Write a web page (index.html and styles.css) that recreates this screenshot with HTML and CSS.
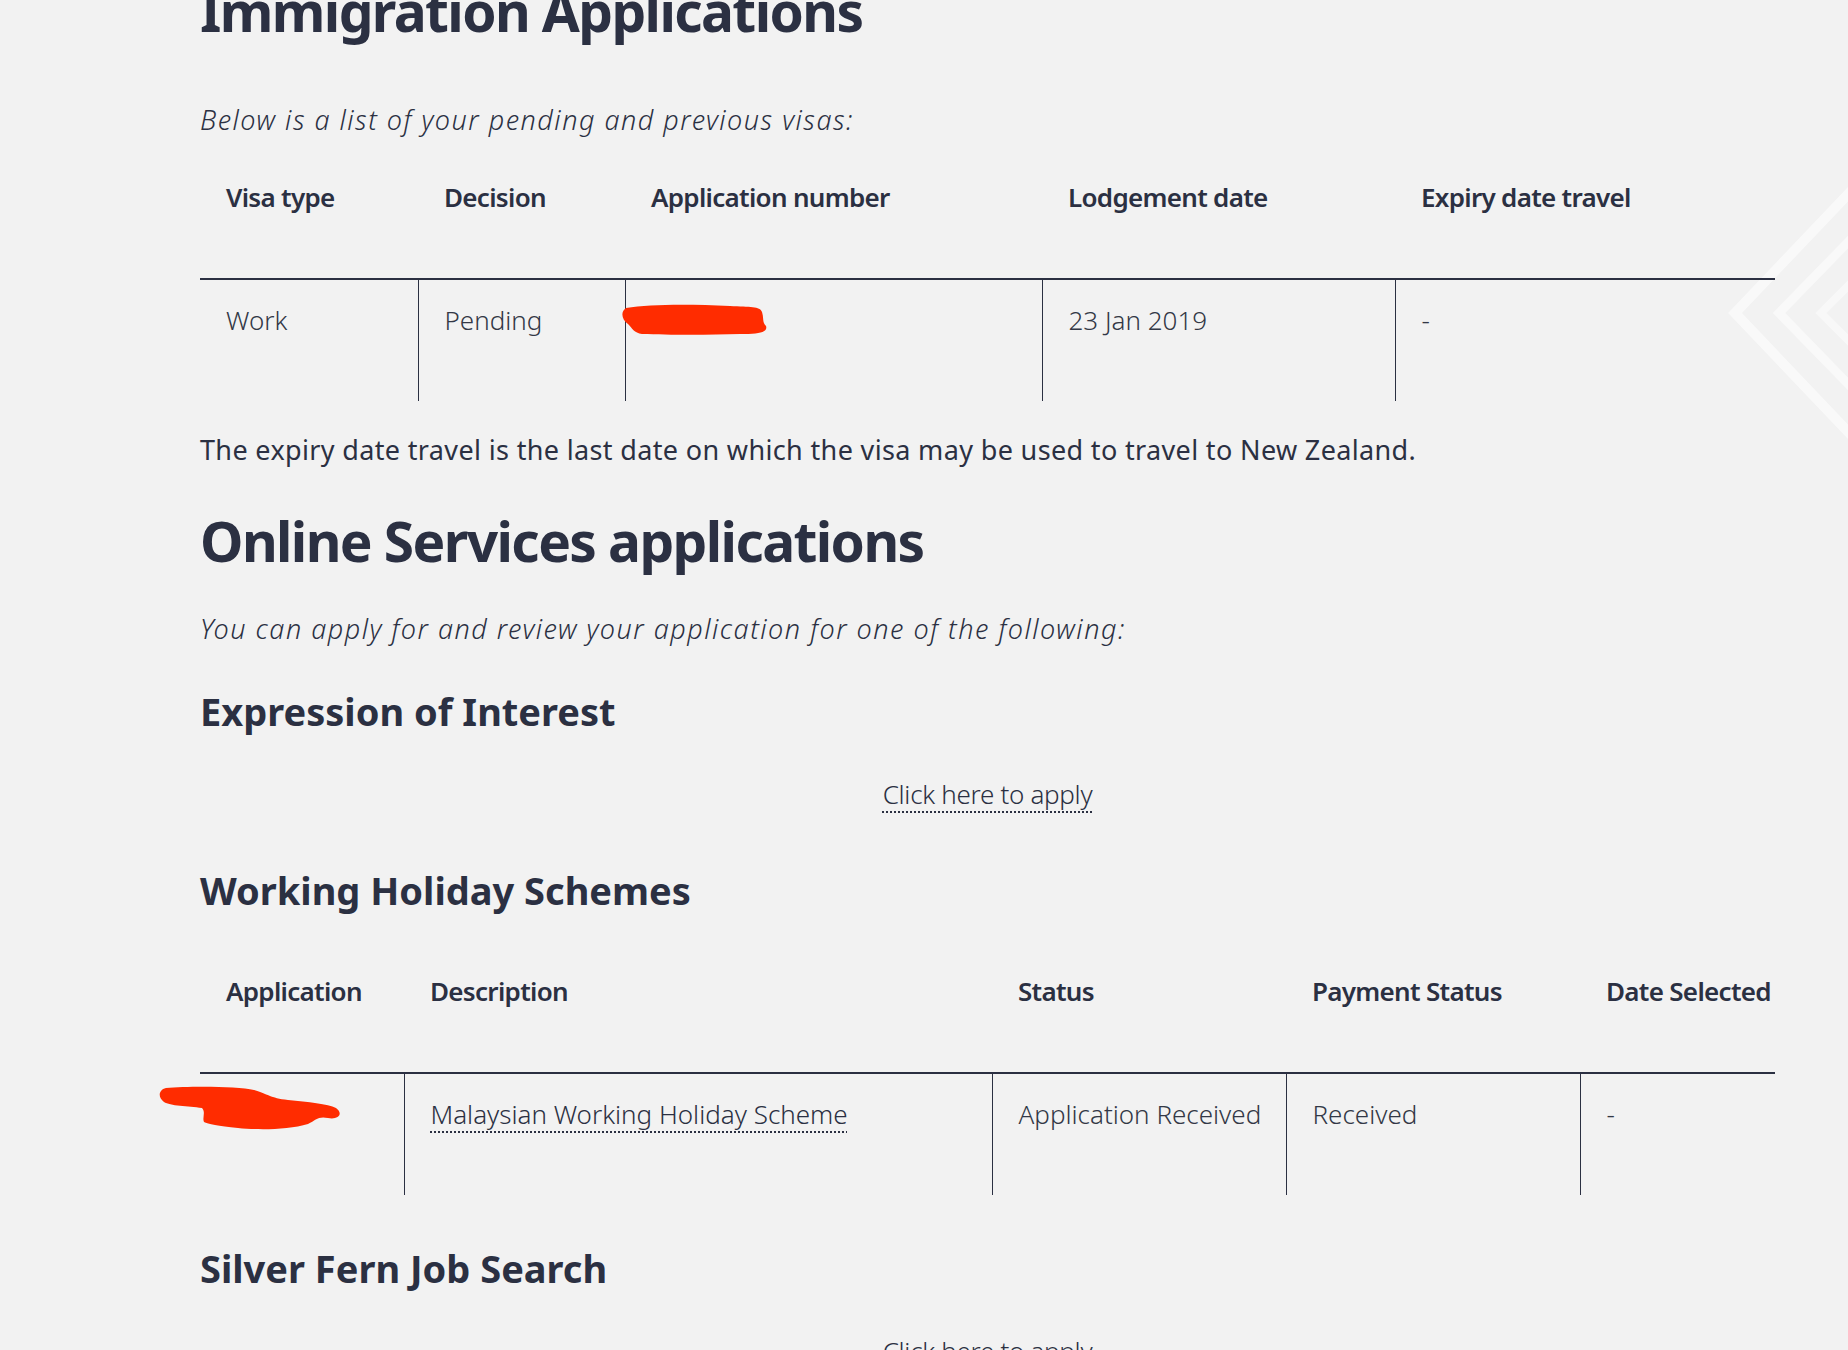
FILE: index.html
```html
<!DOCTYPE html>
<html>
<head>
    <meta charset="UTF-8">
    <title>Immigration Applications</title>
    <link rel="stylesheet" href="styles.css">
</head>
<body>
    <svg class="backdrop" viewBox="0 0 118 260" xmlns="http://www.w3.org/2000/svg">
        <polyline points="124,6 6,130 124,254" fill="none" stroke="#ffffff" stroke-width="10" stroke-opacity="0.55"/>
        <polyline points="124,54 50,130 124,206" fill="none" stroke="#ffffff" stroke-width="9" stroke-opacity="0.5"/>
        <polyline points="124,98 92,130 124,162" fill="none" stroke="#ffffff" stroke-width="8" stroke-opacity="0.45"/>
    </svg>

    <div class="page">
        <h1 class="page-title">Immigration Applications</h1>
        <p class="intro">Below is a list of your pending and previous visas:</p>

        <table class="data-table visas">
            <thead>
                <tr>
                    <th class="col-type">Visa type</th>
                    <th class="col-decision">Decision</th>
                    <th class="col-number">Application number</th>
                    <th class="col-lodged">Lodgement date</th>
                    <th class="col-expiry">Expiry date travel</th>
                </tr>
            </thead>
            <tbody>
                <tr>
                    <td>Work</td>
                    <td>Pending</td>
                    <td class="redacted">
                        <svg class="scribble scribble-number" viewBox="0 0 150 34" xmlns="http://www.w3.org/2000/svg">
                            <path d="M6 6 C30 2 70 2 110 4 C130 5 140 4 142 10 C144 16 142 20 146 24 C148 30 140 32 120 32 C90 33 50 33 22 32 C14 31 12 26 8 22 C2 18 0 10 6 6 Z" fill="#ff2c00"/>
                        </svg>
                    </td>
                    <td>23 Jan 2019</td>
                    <td>-</td>
                </tr>
            </tbody>
        </table>

        <p class="note">The expiry date travel is the last date on which the visa may be used to travel to New Zealand.</p>

        <h1 class="page-title section-title">Online Services applications</h1>
        <p class="intro intro-services">You can apply for and review your application for one of the following:</p>

        <h3 class="scheme-title">Expression of Interest</h3>
        <div class="apply-row">
            <a class="apply-link" href="#">Click here to apply</a>
        </div>

        <h3 class="scheme-title whs-title">Working Holiday Schemes</h3>

        <table class="data-table schemes">
            <thead>
                <tr>
                    <th class="col-app">Application</th>
                    <th class="col-desc">Description</th>
                    <th class="col-status">Status</th>
                    <th class="col-payment">Payment Status</th>
                    <th class="col-selected">Date Selected</th>
                </tr>
            </thead>
            <tbody>
                <tr>
                    <td class="redacted">
                        <svg class="scribble scribble-app" viewBox="0 0 184 48" xmlns="http://www.w3.org/2000/svg">
                            <path d="M8 4 C30 2 80 2 96 6 C110 10 112 14 130 16 C150 18 170 20 178 24 C186 30 180 36 170 34 C160 32 158 36 150 40 C130 46 100 46 80 44 C60 42 50 40 46 38 C44 34 48 28 44 24 C30 22 12 22 6 18 C0 14 0 6 8 4 Z" fill="#ff2c00"/>
                        </svg>
                    </td>
                    <td><a class="desc-link" href="#">Malaysian Working Holiday Scheme</a></td>
                    <td>Application Received</td>
                    <td>Received</td>
                    <td>-</td>
                </tr>
            </tbody>
        </table>

        <h3 class="scheme-title fern-title">Silver Fern Job Search</h3>
        <div class="apply-row">
            <a class="apply-link" href="#">Click here to apply</a>
        </div>
    </div>
</body>
</html>
```

FILE: styles.css
```css
:root {
    --background: #f2f2f2;
    --text: #2b3042;
    --text-body: #333846;
    --rule: #2b3042;
    --redact: #ff2c00;
}

html, body {
    margin: 0;
    padding: 0;
}

body {
    font-family: "Noto Sans", "Open Sans", sans-serif;
    background-color: var(--background);
    color: var(--text);
    width: 1848px;
    height: 1350px;
    overflow: hidden;
    position: relative;
}

.backdrop {
    position: absolute;
    left: 1728px;
    top: 183px;
    width: 120px;
    height: 260px;
}

.page {
    position: relative;
    padding: 0 73px 0 200px;
}

.page-title {
    font-size: 55px;
    line-height: 64px;
    font-weight: 700;
    margin: -21px 0 0;
    letter-spacing: -1.6px;
}

.section-title {
    margin-top: 41px;
}

.intro {
    font-size: 27px;
    line-height: 36px;
    font-style: italic;
    font-weight: 300;
    margin: 59px 0 0;
    letter-spacing: 1.5px;
}

.intro-services {
    margin-top: 38px;
}

.note {
    font-size: 27px;
    line-height: 36px;
    margin: 31px 0 0;
    letter-spacing: 0.35px;
}

.scheme-title {
    font-size: 38px;
    line-height: 48px;
    font-weight: 700;
    margin: 40px 0 0;
}

.whs-title {
    margin-top: 54px;
}

.fern-title {
    margin-top: 49px;
}

.apply-row {
    text-align: center;
    margin-top: 41px;
    font-size: 26px;
    line-height: 36px;
    font-weight: 300;
    letter-spacing: -0.3px;
}

.apply-link,
.desc-link {
    color: var(--text);
    text-decoration: underline dotted;
    text-decoration-thickness: 2px;
    text-underline-offset: 7px;
}

/* tables */

.data-table {
    width: 100%;
    table-layout: fixed;
    border-collapse: collapse;
    font-size: 26px;
    line-height: 36px;
}

.visas {
    margin-top: 19px;
}

.schemes {
    margin-top: 37px;
}

.data-table th,
.data-table td {
    box-sizing: border-box;
    padding: 22px 24px 63px 26px;
    text-align: left;
    vertical-align: top;
    white-space: nowrap;
}

.data-table th {
    font-weight: 600;
    letter-spacing: -0.7px;
    border-bottom: 2px solid var(--rule);
}

.data-table td {
    font-weight: 300;
    color: var(--text-body);
}

.data-table td + td {
    border-left: 1px solid var(--rule);
}

.col-type { width: 218px; }
.col-decision { width: 207px; }
.col-number { width: 417px; }
.col-lodged { width: 353px; }
.col-expiry { width: auto; }

.col-app { width: 204px; }
.col-desc { width: 588px; }
.col-status { width: 294px; }
.col-payment { width: 294px; }
.col-selected { width: auto; }

.redacted {
    position: relative;
}

.scribble {
    position: absolute;
}

.scribble-number {
    left: -6px;
    top: 22px;
    width: 150px;
    height: 34px;
}

.scribble-app {
    left: -42px;
    top: 10px;
    width: 184px;
    height: 48px;
}
```
